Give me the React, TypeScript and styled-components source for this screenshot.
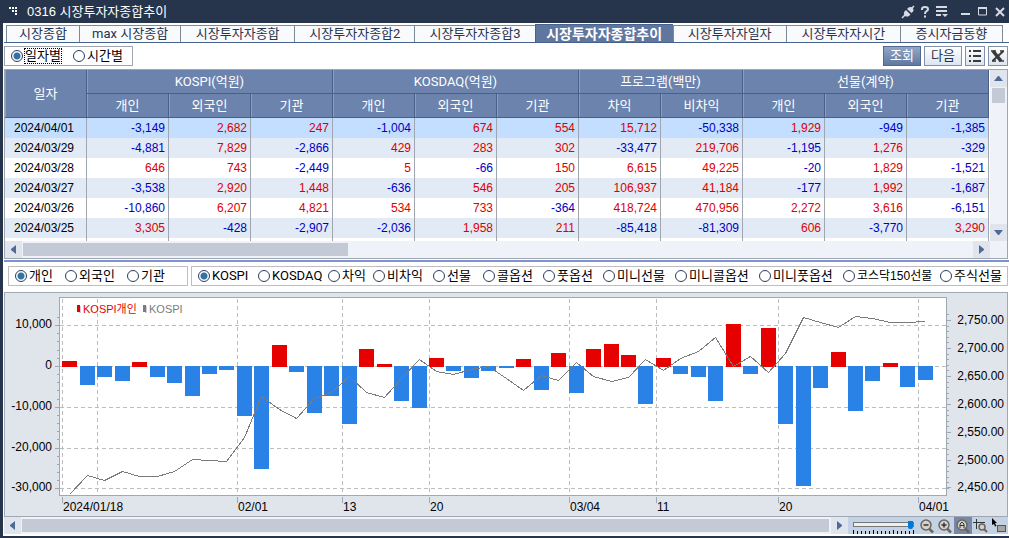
import React, { useState } from "react";
import styled, { createGlobalStyle, css } from "styled-components";

const wide = `Roboto, "Noto Sans CJK KR", sans-serif`;
const numeric = `"Liberation Sans", "Noto Sans CJK KR", sans-serif`;

const Global = createGlobalStyle`
  * { box-sizing: border-box; }
  body { margin: 0; background: #fff; font: 13px/18px ${wide}; color: #000; }
  button, input { font: inherit; margin: 0; padding: 0; }
  svg { display: block; }
`;

const Window = styled.main`
  border-left: 3px solid #27354c;
  border-bottom: 2px solid #27354c;
  background: #fff;
`;

const TitleBar = styled.header`
  display: flex;
  align-items: center;
  height: 23px;
  margin-left: -3px;
  padding: 0 2px 0 9px;
  background: #27354c;
  color: #fff;
`;

const Title = styled.h1`
  flex: 1;
  margin: 0 0 0 9px;
  font: 400 13px/22px ${numeric};
`;

const TitleTools = styled.div`
  display: flex;
  gap: 3px;
`;

const TitleButton = styled.button<{ $gap?: boolean }>`
  display: grid;
  place-items: center;
  width: 14px;
  height: 18px;
  margin-left: ${(p) => (p.$gap ? 7 : 0)}px;
  border: 0;
  background: none;
  color: #d5dbe5;
`;

const Tabs = styled.nav`
  display: grid;
  grid-template-columns: 73fr 101fr 114fr 120fr 120fr 138fr 113fr 114fr 103fr;
  align-items: end;
  height: 20px;
  margin-left: 1px;
  padding: 0 6px 0 2px;
  border-bottom: 1px solid #47628f;
`;

const Tab = styled.button<{ $active?: boolean }>`
  height: 17px;
  border: solid #7b8a99;
  border-width: 1px 0 0 1px;
  background: #f9fafb;
  color: #26334d;
  line-height: 16px;
  white-space: nowrap;
  &:last-child { border-right-width: 1px; }
  ${(p) =>
    p.$active &&
    css`
      height: 18px;
      border-color: #47628f;
      background: #5f769f;
      color: #fff;
      font-size: 14px;
      font-weight: 700;
    `}
`;

const Toolbar = styled.div`
  display: flex;
  align-items: center;
  justify-content: space-between;
  height: 26px;
  padding: 0 1px;
`;

const ButtonGroup = styled.div`
  display: flex;
  gap: 3px;
`;

const ToolButton = styled.button<{ $primary?: boolean; $square?: boolean }>`
  display: grid;
  place-items: center;
  width: ${(p) => (p.$square ? 20 : 38)}px;
  height: 20px;
  border: 1px solid ${(p) => (p.$primary ? "#50678f" : "#8291a8")};
  background: ${(p) =>
    p.$primary ? "linear-gradient(#92a7c9, #5f789f)" : "linear-gradient(#fff, #dce5f0)"};
  color: ${(p) => (p.$primary ? "#fff" : "#26334d")};
`;

const RadioBox = styled.fieldset<{ $columns: string; $width?: number; $line?: string }>`
  display: grid;
  grid-template-columns: ${(p) => p.$columns};
  align-items: center;
  ${(p) => (p.$width ? `width: ${p.$width}px;` : "flex: 1;")}
  min-width: 0;
  height: 20px;
  margin: 0;
  padding: 0 0 0 6px;
  border: 1px solid ${(p) => p.$line || "#bebebe"};
`;

const RadioLabel = styled.label<{ $compact?: boolean; $focus?: boolean }>`
  display: flex;
  align-items: center;
  gap: 2px;
  min-width: 0;
  white-space: nowrap;
  font-family: ${(p) => (p.$compact ? numeric : wide)};
  font-size: ${(p) => (p.$compact ? 12 : 13)}px;
  span {
    line-height: 14px;
    outline: ${(p) => (p.$focus ? "1px dotted #000" : "none")};
  }
`;

const RadioInput = styled.input`
  appearance: none;
  flex: none;
  width: 12px;
  height: 12px;
  border: 1px solid #2c3a5c;
  border-radius: 50%;
  background: #fff;
  &:checked { background: radial-gradient(circle, #2f74a3 0 3px, #fff 4px); }
`;

const GridPanel = styled.section`
  margin: 0 1px;
  border: 1px solid #a0a6b0;
`;

const GridBody = styled.div`
  display: flex;
`;

const Table = styled.table`
  flex: 1;
  width: 100%;
  table-layout: fixed;
  border-collapse: separate;
  border-spacing: 0;
`;

const HeadCell = styled.th`
  height: 24px;
  padding: 0;
  border: solid #4a5f87;
  border-width: 0 1px 1px 0;
  background: #6b83ad;
  box-shadow: inset 1px 0 0 #8b9fc4;
  color: #fff;
  font-weight: 400;
`;

const rowTint = { selected: "#c3deff", odd: "#e2eaf6", even: "#ffffff" };

const Row = styled.tr<{ $tint: keyof typeof rowTint }>`
  background: ${(p) => rowTint[p.$tint]};
`;

const Cell = styled.td<{ $tone?: "up" | "down" }>`
  height: 20px;
  padding: 0 3px 0 0;
  border-right: 1px solid #a0a6b0;
  color: ${(p) => (p.$tone === "up" ? "#dd0000" : p.$tone === "down" ? "#0000c4" : "#000")};
  font: 12px/20px ${numeric};
  text-align: ${(p) => (p.$tone ? "right" : "center")};
`;

const SpacerCell = styled.td`
  height: 3px;
  padding: 0;
  border-right: 1px solid #a0a6b0;
`;

const VScroll = styled.div`
  display: flex;
  flex-direction: column;
  width: 17px;
  margin-left: 1px;
  background: #eff3f9;
`;

const VThumb = styled.div`
  width: 13px;
  height: 15px;
  margin: 1px 2px auto;
  background: #c3c9d5;
`;

const HScroll = styled.div<{ $inset?: boolean }>`
  display: flex;
  flex: 1;
  height: 17px;
  padding-right: ${(p) => (p.$inset ? 17 : 0)}px;
  background: #eff3f9;
`;

const HTrack = styled.div`
  flex: 1;
  padding: 2px 2px 2px 1px;
`;

const HThumb = styled.div<{ $size: string }>`
  width: ${(p) => p.$size};
  height: 13px;
  background: #c3c9d5;
`;

const ArrowButton = styled.button`
  display: grid;
  place-items: center;
  width: 17px;
  height: 17px;
  border: 0;
  background: #e0e5ed;
  color: #4f6a96;
`;

const Splitter = styled.div`
  height: 2px;
  margin: 1px 0 4px 1px;
  background: #7c92d2;
`;

const Filters = styled.div`
  display: flex;
  gap: 3px;
  margin: 0 1px 6px 5px;
`;

const ChartPanel = styled.section`
  margin: 0 1px;
  border: 1px solid #9fa9b4;
  background: #e0e5ec;
`;

const ChartSvg = styled.svg`
  width: 100%;
  height: auto;
`;

const AxisText = styled.text`
  font: 12px ${numeric};
`;

const LegendText = styled.text`
  font: 11px ${numeric};
`;

const Footer = styled.div`
  display: flex;
  height: 19px;
  margin: 0 1px;
`;

const ZoomPanel = styled.div`
  display: flex;
  flex: none;
  width: 160px;
  height: 17px;
  padding-left: 5px;
  background: #c3d3e5;
`;

const SliderBox = styled.div`
  flex: none;
  width: 61px;
  margin-right: 4px;
  padding-top: 3px;
`;

const Slider = styled.input`
  appearance: none;
  display: block;
  width: 61px;
  height: 9px;
  margin-bottom: 1px;
  background: none;
  &::-webkit-slider-runnable-track {
    height: 5px;
    border: 1px solid #777;
    background: #eceff3;
  }
  &::-webkit-slider-thumb {
    appearance: none;
    width: 5px;
    height: 8px;
    margin-top: -2px;
    border-radius: 0 0 2px 2px;
    background: #0078d7;
  }
`;

const ZoomButton = styled.button<{ $active?: boolean }>`
  display: grid;
  place-items: center;
  flex: none;
  width: 18px;
  height: 17px;
  border: 0;
  background: ${(p) => (p.$active ? "#7688a5" : "none")};
`;

const tabs = [
  "시장종합", "max 시장종합", "시장투자자종합", "시장투자자종합2", "시장투자자종합3",
  "시장투자자종합추이", "시장투자자일자", "시장투자자시간", "증시자금동향",
];

const groups: [string, string[]][] = [
  ["KOSPI(억원)", ["개인", "외국인", "기관"]],
  ["KOSDAQ(억원)", ["개인", "외국인", "기관"]],
  ["프로그램(백만)", ["차익", "비차익"]],
  ["선물(계약)", ["개인", "외국인", "기관"]],
];

const rows: [string, string[]][] = [
  ["2024/04/01", ["-3,149", "2,682", "247", "-1,004", "674", "554", "15,712", "-50,338", "1,929", "-949", "-1,385"]],
  ["2024/03/29", ["-4,881", "7,829", "-2,866", "429", "283", "302", "-33,477", "219,706", "-1,195", "1,276", "-329"]],
  ["2024/03/28", ["646", "743", "-2,449", "5", "-66", "150", "6,615", "49,225", "-20", "1,829", "-1,521"]],
  ["2024/03/27", ["-3,538", "2,920", "1,448", "-636", "546", "205", "106,937", "41,184", "-177", "1,992", "-1,687"]],
  ["2024/03/26", ["-10,860", "6,207", "4,821", "534", "733", "-364", "418,724", "470,956", "2,272", "3,616", "-6,151"]],
  ["2024/03/25", ["3,305", "-428", "-2,907", "-2,036", "1,958", "211", "-85,418", "-81,309", "606", "-3,770", "3,290"]],
];

const investors = ["개인", "외국인", "기관"];
const markets = [
  "KOSPI", "KOSDAQ", "차익", "비차익", "선물", "콜옵션", "풋옵션",
  "미니선물", "미니콜옵션", "미니풋옵션", "코스닥150선물", "주식선물",
];

// Vertical ends of each day's net-buying bar; values above the zero line are net purchases.
const ZERO = 366;
const barEnds = [
  361, 385, 377, 381, 362, 377, 383, 396, 374, 370, 416, 469, 345, 372, 413, 396, 424, 349, 364,
  401, 408, 358, 371, 378, 371, 368, 359, 390, 353, 393, 349, 344, 355, 404, 358, 374, 377, 401,
  324, 374, 328, 424, 486, 388, 352, 411, 381, 363, 387, 380,
];
const indexLine = [
  494, 475, 480, 471, 476, 476, 471, 459, 460, 461, 437, 396, 409, 418, 398, 392, 376, 392, 397,
  378, 359, 371, 374, 369, 366, 378, 390, 375, 380, 362, 376, 381, 377, 359, 370, 358, 351, 337,
  366, 356, 372, 353, 317, 322, 327, 316, 318, 322, 322, 321,
];
const barX = (i: number) => Math.round(62.3 + 17.46 * i);

const leftTicks: [string, number][] = [
  ["10,000", 325], ["0", 366], ["-10,000", 407], ["-20,000", 448], ["-30,000", 488],
];
const rightTicks: [string, number][] = [
  ["2,750.00", 320], ["2,700.00", 348], ["2,650.00", 376], ["2,600.00", 404],
  ["2,550.00", 432], ["2,500.00", 460], ["2,450.00", 487],
];
const dateTicks: [string, number][] = [
  ["2024/01/18", 62], ["02/01", 237], ["13", 342], ["20", 429],
  ["03/04", 569], ["11", 656], ["20", 778], ["04/01", 918],
];

function Chart() {
  const minorLeft = Array.from({ length: 21 }, (_, i) => Math.round(317 + i * 8.16));
  const minorRight = Array.from({ length: 32 }, (_, i) => Math.round(314.4 + i * 5.6));
  return (
    <ChartSvg viewBox="5 293 1002 223" role="img" aria-label="KOSPI 개인 순매수 및 지수">
      <g shapeRendering="crispEdges">
        <rect x="59.5" y="297.5" width="887" height="198" fill="#fff" stroke="#9fa9b4" />
        <g stroke="#bdbdbd" strokeDasharray="4 3">
          {leftTicks.map(([, y]) => (
            <line key={y} x1="60" x2="946" y1={y + 0.5} y2={y + 0.5} />
          ))}
          {[97, ...dateTicks.map((d) => d[1])].map((x) => (
            <line key={x} x1={x + 0.5} x2={x + 0.5} y1="299" y2="495" />
          ))}
        </g>
        <g stroke="#9fa9b4">
          {leftTicks.map(([, y]) => (
            <line key={y} x1="55" x2="59" y1={y + 0.5} y2={y + 0.5} />
          ))}
          {minorLeft.map((y) => (
            <line key={y} x1="57" x2="59" y1={y + 0.5} y2={y + 0.5} />
          ))}
          {rightTicks.map(([, y]) => (
            <line key={y} x1="947" x2="951" y1={y + 0.5} y2={y + 0.5} />
          ))}
          {minorRight.map((y) => (
            <line key={y} x1="947" x2="949" y1={y + 0.5} y2={y + 0.5} />
          ))}
          {dateTicks.map(([, x]) => (
            <line key={x} x1={x + 0.5} x2={x + 0.5} y1="497" y2="503" />
          ))}
        </g>
        {barEnds.map((end, i) =>
          end < ZERO ? (
            <rect key={i} x={barX(i)} y={end} width="15" height={ZERO + 1 - end} fill="#e60000" />
          ) : (
            <rect key={i} x={barX(i)} y={ZERO} width="15" height={end - ZERO} fill="#2a82e6" />
          )
        )}
        <polyline
          points={indexLine.map((y, i) => `${barX(i) + 7.5},${y + 0.5}`).join(" ")}
          fill="none"
          stroke="#7b7b7b"
        />
        <rect x="79" y="306" width="2" height="7" fill="#d0d0d0" />
        <rect x="77" y="305" width="3" height="7" fill="#e60000" />
        <rect x="145" y="306" width="2" height="7" fill="#d0d0d0" />
        <rect x="143" y="305" width="3" height="7" fill="#7b7b7b" />
      </g>
      <LegendText x="83" y="313" fill="#e60000">KOSPI개인</LegendText>
      <LegendText x="149" y="313" fill="#7b7b7b">KOSPI</LegendText>
      {leftTicks.map(([t, y]) => (
        <AxisText key={t} x="52" y={y + 3} textAnchor="end">{t}</AxisText>
      ))}
      {rightTicks.map(([t, y]) => (
        <AxisText key={t} x="1004" y={y + 4} textAnchor="end">{t}</AxisText>
      ))}
      {dateTicks.map(([t, x]) => (
        <AxisText key={x} x={x + 1} y="511">{t}</AxisText>
      ))}
    </ChartSvg>
  );
}

const arrows = {
  up: "M0 7h9L5 2H4z",
  down: "M0 2h9L5 7H4z",
  left: "M7 0v9L2 5V4z",
  right: "M2 0v9L7 5V4z",
};

function Arrow({ dir, label }: { dir: keyof typeof arrows; label: string }) {
  return (
    <ArrowButton aria-label={label}>
      <svg width="9" height="9"><path d={arrows[dir]} fill="currentColor" /></svg>
    </ArrowButton>
  );
}

function Magnifier({ mark }: { mark: React.ReactNode }) {
  return (
    <svg width="16" height="16" viewBox="0 0 16 16" fill="none">
      <path d="M10 10.500l4 4" stroke="#6b655f" strokeWidth="2.500" />
      <circle cx="7" cy="7" r="5" fill="#d4d1cc" stroke="#6b655f" strokeWidth="1.500" />
      {mark}
    </svg>
  );
}

function Radios(props: {
  name: string;
  items: string[];
  columns: string;
  width?: number;
  line?: string;
  focusFirst?: boolean;
}) {
  const [value, setValue] = useState(props.items[0]);
  return (
    <RadioBox $columns={props.columns} $width={props.width} $line={props.line}>
      {props.items.map((item, i) => (
        <RadioLabel key={item} $compact={item.includes("150")} $focus={props.focusFirst && i === 0}>
          <RadioInput
            type="radio"
            name={props.name}
            checked={value === item}
            onChange={() => setValue(item)}
          />
          <span>{item}</span>
        </RadioLabel>
      ))}
    </RadioBox>
  );
}

export default function App() {
  return (
    <Window>
      <Global />
      <TitleBar>
        <svg width="9" height="9" fill="#fff">
          <path d="M0 0h2v2H0zM3 0h2v2H3zM6 0h2v2H6zM3 3h2v2H3zM6 3h2v2H6zM6 6h2v2H6z" />
        </svg>
        <Title>0316 시장투자자종합추이</Title>
        <TitleTools>
          <TitleButton aria-label="연결">
            <svg width="14" height="14" viewBox="0 0 14 14" fill="none" stroke="currentColor">
              <path d="M1 13l3-3M10 4l3-3" strokeWidth="1.5" />
              <path d="M3.500 6.500L5 5l4.500 4.500L8 11q-2 1-4 0-2-2-.500-4.500z" fill="currentColor" stroke="none" />
              <path d="M6 4l1.500-1.500q2-1 4 0 1.500 2 .500 4L10.500 8z" fill="currentColor" stroke="none" />
            </svg>
          </TitleButton>
          <TitleButton aria-label="도움말">
            <svg width="10" height="12" viewBox="0 0 10 12" fill="none" stroke="currentColor" strokeWidth="2">
              <path d="M2 4V3q0-2 3-2t3 2.200Q8 4.500 6.500 5.200 5 6 5 8M5 9.500v2" />
            </svg>
          </TitleButton>
          <TitleButton aria-label="메뉴">
            <svg width="12" height="12" viewBox="0 0 12 12" fill="currentColor">
              <path d="M0 0h11v2H0zM0 4h11v2H0zM0 8h5v2H0zM6 8h6L9 11z" />
            </svg>
          </TitleButton>
          <TitleButton aria-label="최소화" $gap>
            <svg width="10" height="10" fill="currentColor"><path d="M0 6h9v2H0z" /></svg>
          </TitleButton>
          <TitleButton aria-label="최대화">
            <svg width="10" height="9" fill="none" stroke="currentColor">
              <path d="M.5 1v7h8V1M0 1.500h9M0 .5h9" />
            </svg>
          </TitleButton>
          <TitleButton aria-label="닫기">
            <svg width="10" height="10" fill="none" stroke="currentColor" strokeWidth="2">
              <path d="M1 1l8 8M9 1L1 9" />
            </svg>
          </TitleButton>
        </TitleTools>
      </TitleBar>

      <Tabs>
        {tabs.map((t) => (
          <Tab key={t} $active={t === "시장투자자종합추이"}>{t}</Tab>
        ))}
      </Tabs>

      <Toolbar>
        <Radios
          name="period"
          items={["일자별", "시간별"]}
          columns="62px auto"
          width={129}
          line="#a0a6b0"
          focusFirst
        />
        <ButtonGroup>
          <ToolButton $primary>조회</ToolButton>
          <ToolButton>다음</ToolButton>
          <ToolButton $square aria-label="목록">
            <svg width="12" height="12" fill="#3a3a3a">
              <path d="M0 0h2v2H0zM4 0h8v2H4zM0 5h2v2H0zM4 5h8v2H4zM0 10h2v2H0zM4 10h8v2H4z" />
            </svg>
          </ToolButton>
          <ToolButton $square aria-label="엑셀">
            <svg width="14" height="12" viewBox="0 0 14 12" fill="none" stroke="#3a3a3a">
              <path d="M2 1l8 10" strokeWidth="3.500" />
              <path d="M12.500 1L1.500 11" strokeWidth="2" />
              <path d="M0 1h5M9 1h4M1 11h4M8 11h5" strokeWidth="1.500" />
            </svg>
          </ToolButton>
        </ButtonGroup>
      </Toolbar>

      <GridPanel>
        <GridBody>
          <Table>
            <thead>
              <tr>
                <HeadCell rowSpan={2}>일자</HeadCell>
                {groups.map(([g, cols]) => (
                  <HeadCell key={g} colSpan={cols.length}>{g}</HeadCell>
                ))}
              </tr>
              <tr>
                {groups.flatMap(([g, cols]) =>
                  cols.map((c) => <HeadCell key={g + c}>{c}</HeadCell>)
                )}
              </tr>
            </thead>
            <tbody>
              {rows.map(([date, values], r) => (
                <Row key={date} $tint={r === 0 ? "selected" : r % 2 ? "odd" : "even"}>
                  <Cell>{date}</Cell>
                  {values.map((v, c) => (
                    <Cell key={c} $tone={v.startsWith("-") ? "down" : "up"}>{v}</Cell>
                  ))}
                </Row>
              ))}
              <tr aria-hidden="true">
                {Array.from({ length: 12 }, (_, i) => <SpacerCell key={i} />)}
              </tr>
            </tbody>
          </Table>
          <VScroll>
            <Arrow dir="up" label="위로" />
            <VThumb />
            <Arrow dir="down" label="아래로" />
          </VScroll>
        </GridBody>
        <HScroll $inset>
          <Arrow dir="left" label="왼쪽" />
          <HTrack><HThumb $size="34.3%" /></HTrack>
          <Arrow dir="right" label="오른쪽" />
        </HScroll>
      </GridPanel>

      <Splitter />

      <Filters>
        <Radios name="investor" items={investors} columns="50px 62px auto" width={180} />
        <Radios
          name="market"
          items={markets}
          columns="60fr 70fr 45fr 60fr 50fr 60fr 60fr 72fr 84fr 84fr 97fr 67fr"
        />
      </Filters>

      <ChartPanel><Chart /></ChartPanel>

      <Footer>
        <HScroll>
          <Arrow dir="left" label="차트 왼쪽" />
          <HTrack><HThumb $size="100%" /></HTrack>
          <Arrow dir="right" label="차트 오른쪽" />
        </HScroll>
        <ZoomPanel>
          <SliderBox>
            <Slider type="range" defaultValue={100} aria-label="확대 비율" />
            <svg width="61" height="4" fill="#000">
              {Array.from({ length: 16 }, (_, i) => (
                <rect key={i} x={i * 4} y={i % 5 === 0 ? 0 : 1} width="1" height="4" />
              ))}
            </svg>
          </SliderBox>
          <ZoomButton aria-label="축소">
            <Magnifier mark={<path d="M4.500 7h5" stroke="#333" strokeWidth="1.500" />} />
          </ZoomButton>
          <ZoomButton aria-label="확대">
            <Magnifier mark={<path d="M4.500 7h5M7 4.500v5" stroke="#333" strokeWidth="1.500" />} />
          </ZoomButton>
          <ZoomButton aria-label="자동" $active>
            <Magnifier mark={<path d="M5 10V6l2-2 2 2v4M5 7.500h4" stroke="#333" />} />
          </ZoomButton>
          <ZoomButton aria-label="영역 확대">
            <svg width="16" height="16" viewBox="0 0 16 16" fill="none">
              <path d="M0 4.500h12M3.500 1v10" stroke="#333" />
              <path d="M11 11l3 3" stroke="#6b655f" strokeWidth="2" />
              <circle cx="9" cy="9" r="3" fill="#d4d1cc" stroke="#6b655f" strokeWidth="1.500" />
            </svg>
          </ZoomButton>
          <ZoomButton aria-label="선택">
            <svg width="16" height="16" viewBox="0 0 16 16">
              <path d="M1 0l5 5H4l1.500 3-1.500.500L3 6 1 7z" fill="#000" />
              <rect x="6.500" y="7.500" width="8" height="6" fill="#a7a6a2" stroke="#555" />
            </svg>
          </ZoomButton>
        </ZoomPanel>
      </Footer>
    </Window>
  );
}
